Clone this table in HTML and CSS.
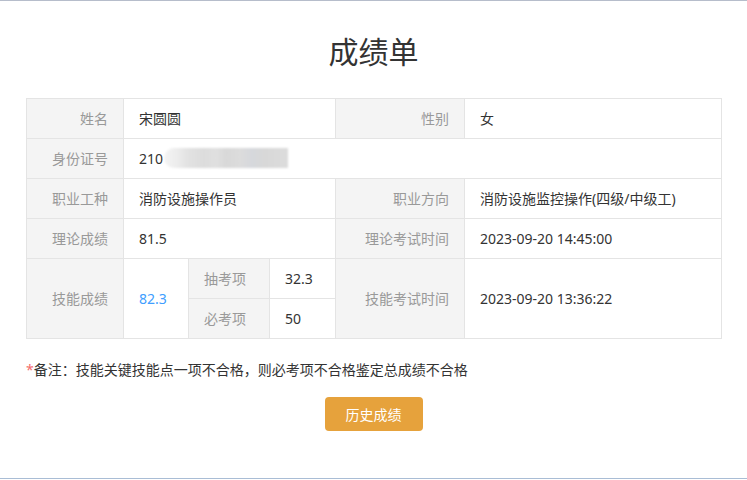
FILE: index.html
```html
<!DOCTYPE html>
<html lang="zh">
<head>
<meta charset="utf-8">
<title>成绩单</title>
<link rel="stylesheet" href="styles.css">
</head>
<body>
<div class="page">
  <div class="head"><h1 class="title">成绩单</h1></div>
  <div class="wrap">
    <table class="score">
      <colgroup>
        <col class="c1"><col class="c2"><col class="c3"><col class="c4"><col class="c5"><col class="c6">
      </colgroup>
      <tbody>
        <tr>
          <td class="lab">姓名</td>
          <td class="val" colspan="3">宋圆圆</td>
          <td class="lab">性别</td>
          <td class="val">女</td>
        </tr>
        <tr>
          <td class="lab">身份证号</td>
          <td class="val" colspan="5">210<span class="mask"></span></td>
        </tr>
        <tr>
          <td class="lab">职业工种</td>
          <td class="val" colspan="3">消防设施操作员</td>
          <td class="lab">职业方向</td>
          <td class="val">消防设施监控操作(四级/中级工)</td>
        </tr>
        <tr>
          <td class="lab">理论成绩</td>
          <td class="val" colspan="3">81.5</td>
          <td class="lab">理论考试时间</td>
          <td class="val">2023-09-20 14:45:00</td>
        </tr>
        <tr>
          <td class="lab" rowspan="2">技能成绩</td>
          <td class="val blue" rowspan="2">82.3</td>
          <td class="sub">抽考项</td>
          <td class="val">32.3</td>
          <td class="lab" rowspan="2">技能考试时间</td>
          <td class="val" rowspan="2">2023-09-20 13:36:22</td>
        </tr>
        <tr>
          <td class="sub">必考项</td>
          <td class="val">50</td>
        </tr>
      </tbody>
    </table>
    <p class="note"><span class="star">*</span>备注：技能关键技能点一项不合格，则必考项不合格鉴定总成绩不合格</p>
    <div class="actions"><button class="btn">历史成绩</button></div>
  </div>
</div>
</body>
</html>
```
FILE: styles.css
```css
html, body {
  margin: 0;
  padding: 0;
  background: #fff;
}
body {
  font-family: "Noto Sans", "Noto Sans CJK SC", sans-serif;
  color: #333;
}
.page {
  border-top: 1px solid #b6bdcb;
  border-bottom: 1px solid #a9bdd5;
  height: 477px;
  box-sizing: content-box;
}
.head {
  height: 97px;
  display: flex;
  align-items: center;
  justify-content: center;
}
.title {
  margin: 0;
  font-family: "Noto Sans CJK SC", sans-serif;
  font-size: 30px;
  font-weight: 400;
  color: #333;
  line-height: 40px;
}
.wrap {
  padding: 0 26px;
}
.score {
  width: 695px;
  table-layout: fixed;
  border-collapse: collapse;
  font-size: 14px;
}
.c1 { width: 97px; }
.c2 { width: 65px; }
.c3 { width: 81px; }
.c4 { width: 66px; }
.c5 { width: 129px; }
.c6 { width: 257px; }
.score td {
  border: 1px solid #e4e4e4;
  height: 40px;
  padding: 0 15px;
  box-sizing: border-box;
  line-height: 20px;
  white-space: nowrap;
}
.lab {
  background: #f4f4f4;
  color: #999;
  text-align: right;
}
.sub {
  background: #f4f4f4;
  color: #999;
  text-align: left;
}
.val {
  color: #333;
}
.blue {
  color: #409eff;
}
.mask {
  display: inline-block;
  vertical-align: -4px;
  width: 124px;
  height: 20px;
  margin-left: 1px;
  background: linear-gradient(90deg,
    #f4f4f4 0, #ececec 14px, #e2e2e2 24px, #dcdcdc 40px, #e0e0e0 52px,
    #d8d8d8 62px, #dcdcdc 76px, #d6d8dc 88px, #d8d8d8 100px, #dcdcdc 124px);
  border-radius: 10px 0 0 10px;
  filter: blur(1px);
}
.note {
  margin: 20px 0 0;
  font-size: 14px;
  line-height: 22px;
  color: #333;
}
.star {
  color: #f56c6c;
}
.actions {
  display: flex;
  justify-content: center;
  margin-top: 16px;
}
.btn {
  width: 98px;
  height: 34px;
  border: none;
  border-radius: 4px;
  background: #e6a23c;
  color: #fff;
  font-family: "Noto Sans CJK SC", sans-serif;
  font-size: 14px;
  padding: 0;
}
```
